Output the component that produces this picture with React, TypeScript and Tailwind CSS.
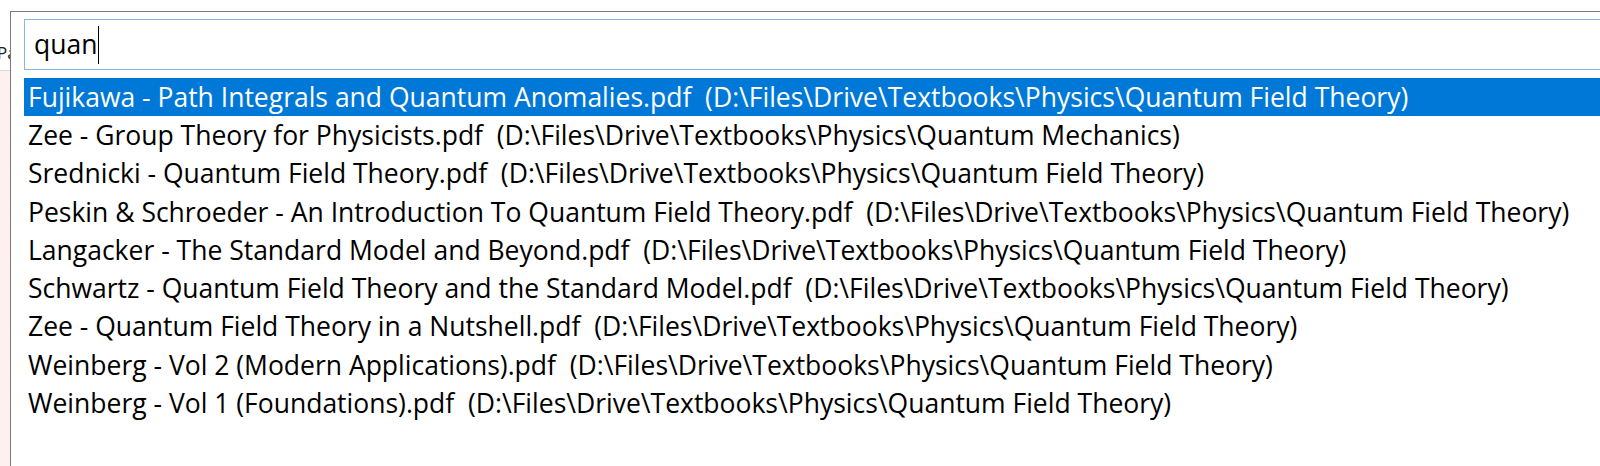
import React from "react";

const rows = [
  "Fujikawa - Path Integrals and Quantum Anomalies.pdf  (D:\\Files\\Drive\\Textbooks\\Physics\\Quantum Field Theory)",
  "Zee - Group Theory for Physicists.pdf  (D:\\Files\\Drive\\Textbooks\\Physics\\Quantum Mechanics)",
  "Srednicki - Quantum Field Theory.pdf  (D:\\Files\\Drive\\Textbooks\\Physics\\Quantum Field Theory)",
  "Peskin & Schroeder - An Introduction To Quantum Field Theory.pdf  (D:\\Files\\Drive\\Textbooks\\Physics\\Quantum Field Theory)",
  "Langacker - The Standard Model and Beyond.pdf  (D:\\Files\\Drive\\Textbooks\\Physics\\Quantum Field Theory)",
  "Schwartz - Quantum Field Theory and the Standard Model.pdf  (D:\\Files\\Drive\\Textbooks\\Physics\\Quantum Field Theory)",
  "Zee - Quantum Field Theory in a Nutshell.pdf  (D:\\Files\\Drive\\Textbooks\\Physics\\Quantum Field Theory)",
  "Weinberg - Vol 2 (Modern Applications).pdf  (D:\\Files\\Drive\\Textbooks\\Physics\\Quantum Field Theory)",
  "Weinberg - Vol 1 (Foundations).pdf  (D:\\Files\\Drive\\Textbooks\\Physics\\Quantum Field Theory)",
];

export default function App() {
  return (
    <div className="flex h-[466px] w-[1600px] overflow-hidden bg-white font-['Open_Sans','Noto_Sans',sans-serif] text-black">
      <div className="flex w-[10px] shrink-0 flex-col overflow-hidden">
        <div className="relative h-[71px] shrink-0 border-b border-[#d9d9d9] bg-white">
          <span className="absolute left-[-3px] top-[44px] whitespace-nowrap text-[17px] leading-none text-[#222]">Pa</span>
        </div>
        <div className="flex-1 bg-[#fdf0ee]" />
      </div>
      <div className="mt-[11px] flex min-w-0 flex-1 flex-col border-l border-t border-[#7a7a7a] bg-white pl-[13px] pt-[7px]">
        <div className="flex h-[51px] w-[1600px] shrink-0 items-center border border-[#86b6e6] pl-[9px]">
          <span className="whitespace-pre text-[26.5px] leading-none">quan</span>
          <span className="ml-[1px] h-[38px] w-px bg-black" />
        </div>
        <div className="mt-[8px] flex w-[1600px] flex-col">
          {rows.map((r, i) => (
            <div
              key={i}
              className={
                "flex h-[38.25px] shrink-0 items-center whitespace-pre pl-[4px] text-[26.5px] leading-none " +
                (i === 0 ? "bg-[#0078d7] text-white" : "text-black")
              }
            >
              {r}
            </div>
          ))}
        </div>
      </div>
    </div>
  );
}
